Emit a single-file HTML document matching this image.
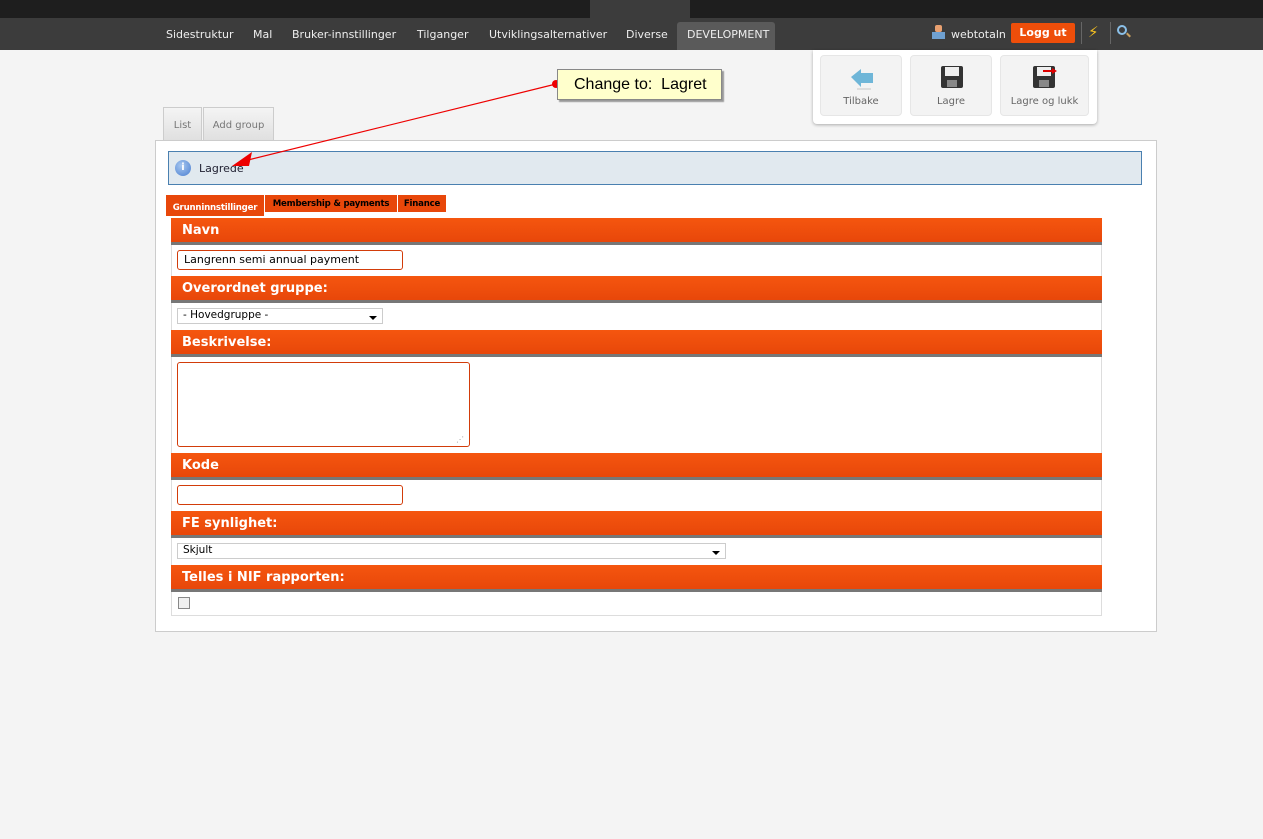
<!DOCTYPE html>
<html><head><style>
*{box-sizing:border-box;margin:0;padding:0}
body{width:1263px;height:839px;background:#f4f4f4;font-family:"DejaVu Sans","Liberation Sans",sans-serif;position:relative;overflow:hidden}
.a{position:absolute}
.nav span{position:absolute;top:10px;font-size:11px;color:#eee}
.btn{position:absolute;top:5px;height:61px;background:#f3f3f3;border:1px solid #e6e6e6;border-radius:4px;font-size:10px;color:#666;text-align:center}
.btn div.l{position:absolute;bottom:8px;width:100%}
.hdr{position:absolute;left:171px;width:931px;height:27px;background:linear-gradient(#f5560f,#e8470a);border-bottom:3px solid #777;color:#fff;font-weight:bold;font-size:13px;padding:5px 0 0 11px}
.row{position:absolute;left:171px;width:931px;background:#fff;border-left:1px solid #ddd;border-right:1px solid #ddd}
.inp{position:absolute;border:1px solid #d23c0a;border-radius:3px;background:#fff;font-size:11px;padding:2px 6px}
.sel{position:absolute;border:1px solid #ccc;background:#fff;font-size:10.5px;padding:0 5px;height:16px}
.sel:after{content:"";position:absolute;right:5px;top:7px;border:4px solid transparent;border-top:4px solid #000}
.ot{position:absolute;background:#e8470a;color:#000;font-size:8.6px;font-weight:bold;padding:4px 0 0 0;text-align:center;height:19px;border:1px solid #fff;white-space:nowrap;overflow:hidden;letter-spacing:-0.2px}
</style></head><body>
<div class="a" style="left:0;top:0;width:1263px;height:18px;background:#1e1e1e"></div>
<div class="a" style="left:590px;top:0;width:100px;height:18px;background:#3c3c3c"></div>
<div class="a nav" style="left:0;top:18px;width:1263px;height:32px;background:#3c3c3c">
<div class="a" style="left:677px;top:4px;width:98px;height:28px;background:#5a5a5a;border-radius:3px 3px 0 0"></div>
<span style="left:166px">Sidestruktur</span><span style="left:253px">Mal</span><span style="left:292px">Bruker-innstillinger</span><span style="left:417px">Tilganger</span><span style="left:489px">Utviklingsalternativer</span><span style="left:626px">Diverse</span><span style="left:687px">DEVELOPMENT</span>
<div class="a" style="left:932px;top:7px;width:13px;height:14px"><div class="a" style="left:3px;top:0;width:7px;height:7px;background:#e8a070;border-radius:2px"></div><div class="a" style="left:0;top:7px;width:13px;height:7px;background:#6fa0d0"></div></div>
<span style="left:951px">webtotaln</span>
<div class="a" style="left:1011px;top:5px;width:64px;height:20px;background:#ee4e0a;border-radius:2px;color:#fff;font-weight:bold;font-size:11px;text-align:center;line-height:20px">Logg ut</div>
<div class="a" style="left:1081px;top:4px;width:1px;height:22px;background:#666"></div>
<div class="a" style="left:1088px;top:5px;color:#f5c020;font-size:15px">⚡</div>
<div class="a" style="left:1110px;top:4px;width:1px;height:22px;background:#666"></div>
<div class="a" style="left:1117px;top:7px;width:10px;height:10px;border:2px solid #8bc0e8;border-radius:50%"></div>
<div class="a" style="left:1126px;top:16px;width:5px;height:2px;background:#c9a060;transform:rotate(45deg)"></div>
</div>
<div class="a" style="left:813px;top:50px;width:284px;height:74px;background:#fff;border-radius:0 0 4px 4px;box-shadow:0 1px 3px rgba(0,0,0,.3)">
<div class="btn" style="left:7px;width:82px"><svg class="a" style="left:28px;top:11px" width="26" height="24"><path d="M2 10 L12 2 V6 H24 V16 H12 V20 Z" fill="#6fb6d8"/><rect x="8" y="21" width="14" height="2" fill="#ddd"/></svg><div class="l">Tilbake</div></div>
<div class="btn" style="left:97px;width:82px"><svg class="a" style="left:30px;top:10px" width="22" height="22"><rect x="0" y="0" width="22" height="22" rx="2" fill="#333"/><rect x="4" y="1" width="14" height="9" fill="#eee"/><rect x="6" y="14" width="10" height="7" fill="#888"/></svg><div class="l">Lagre</div></div>
<div class="btn" style="left:187px;width:89px"><svg class="a" style="left:32px;top:10px" width="26" height="22"><rect x="0" y="0" width="22" height="22" rx="2" fill="#333"/><rect x="4" y="1" width="14" height="9" fill="#eee"/><rect x="6" y="14" width="10" height="7" fill="#888"/><path d="M10 4 H19 V2 L24 5 L19 8 V6 H10Z" fill="#d00"/></svg><div class="l">Lagre og lukk</div></div>
</div>
<div class="a" style="left:163px;top:107px;width:39px;height:34px;background:linear-gradient(#f4f4f4,#e0e0e0);border:1px solid #ccc;font-size:10px;color:#777;text-align:center;line-height:36px">List</div>
<div class="a" style="left:203px;top:107px;width:71px;height:34px;background:linear-gradient(#f4f4f4,#e0e0e0);border:1px solid #ccc;font-size:10px;color:#777;text-align:center;line-height:36px">Add group</div>
<div class="a" style="left:155px;top:140px;width:1002px;height:492px;background:#fff;border:1px solid #ccc"></div>
<div class="a" style="left:168px;top:151px;width:974px;height:34px;background:#e1e9ef;border:1px solid #4a80b0">
<div class="a" style="left:6px;top:8px;width:16px;height:16px;border-radius:50%;background:radial-gradient(circle at 40% 35%,#a8c8f0,#4a7ed0);color:#fff;font-size:10px;text-align:center;line-height:16px;font-weight:bold">i</div>
<div class="a" style="left:30px;top:10px;font-size:11px;color:#223">Lagrede</div></div>
<div class="ot" style="left:165px;top:194px;height:23px;padding-top:8px;color:#fff;width:100px">Grunninnstillinger</div>
<div class="ot" style="left:264px;top:194px;width:134px">Membership &amp; payments</div>
<div class="ot" style="left:397px;top:194px;width:50px">Finance</div>
<div class="hdr" style="top:218px">Navn</div>
<div class="row" style="top:245px;height:31px"><div class="inp" style="left:5px;top:5px;width:226px;height:20px">Langrenn semi annual payment</div></div>
<div class="hdr" style="top:276px">Overordnet gruppe:</div>
<div class="row" style="top:303px;height:27px"><div class="sel" style="left:5px;top:5px;width:206px">- Hovedgruppe -</div></div>
<div class="hdr" style="top:330px">Beskrivelse:</div>
<div class="row" style="top:357px;height:96px"><div class="inp" style="left:5px;top:5px;width:293px;height:85px"><span class="a" style="right:5px;bottom:2px;font-size:8px;color:#999">⋰</span></div></div>
<div class="hdr" style="top:453px">Kode</div>
<div class="row" style="top:480px;height:31px"><div class="inp" style="left:5px;top:5px;width:226px;height:20px"></div></div>
<div class="hdr" style="top:511px">FE synlighet:</div>
<div class="row" style="top:538px;height:27px"><div class="sel" style="left:5px;top:5px;width:549px">Skjult</div></div>
<div class="hdr" style="top:565px">Telles i NIF rapporten:</div>
<div class="row" style="top:592px;height:24px;border-bottom:1px solid #ddd"><div class="a" style="left:6px;top:5px;width:12px;height:12px;border:1px solid #888;background:#f0f0f0"></div></div>
<svg class="a" style="left:0;top:0" width="1263" height="839"><line x1="556" y1="84" x2="248" y2="160" stroke="#e00" stroke-width="1.2"/><path d="M232 166 L252 152 L249 166Z" fill="#e00"/><circle cx="556" cy="84" r="4" fill="#e00"/></svg>
<div class="a" style="left:557px;top:69px;width:165px;height:31px;background:#ffffcc;border:1px solid #888;box-shadow:2px 2px 1px #999;font-family:'Liberation Sans',sans-serif;font-size:16px;padding:6px 0 0 16px">Change to:&nbsp; Lagret</div>
</body></html>
